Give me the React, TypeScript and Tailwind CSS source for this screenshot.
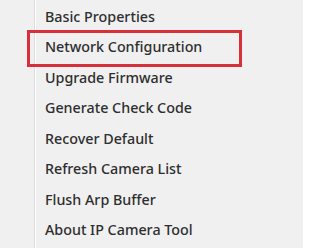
const items = [
  'Basic Properties',
  'Network Configuration',
  'Upgrade Firmware',
  'Generate Check Code',
  'Recover Default',
  'Refresh Camera List',
  'Flush Arp Buffer',
  'About IP Camera Tool',
]

export default function App() {
  return (
    <div className="w-[303px] h-[248px] overflow-hidden bg-[#f0f0f0] flex font-['Noto_Sans',sans-serif]">
      {/* Icon gutter */}
      <div className="w-[34px] shrink-0" />
      <div className="w-px bg-[#dcdcdc] shrink-0" />
      <div className="w-px bg-white shrink-0" />
      <div className="flex-1 flex flex-col pt-px">
        {items.map((label, i) => (
          <div key={label} className="h-[30.5px] flex items-center relative">
            {i === 1 && (
              <div className="absolute left-[-9px] top-[-2px] w-[215px] h-[37px] border-[3px] border-[#d8303a]" />
            )}
            <span className="pl-[9px] text-[14.3px] text-[#2e2e2e] font-medium">
              {label}
            </span>
          </div>
        ))}
      </div>
    </div>
  )
}
